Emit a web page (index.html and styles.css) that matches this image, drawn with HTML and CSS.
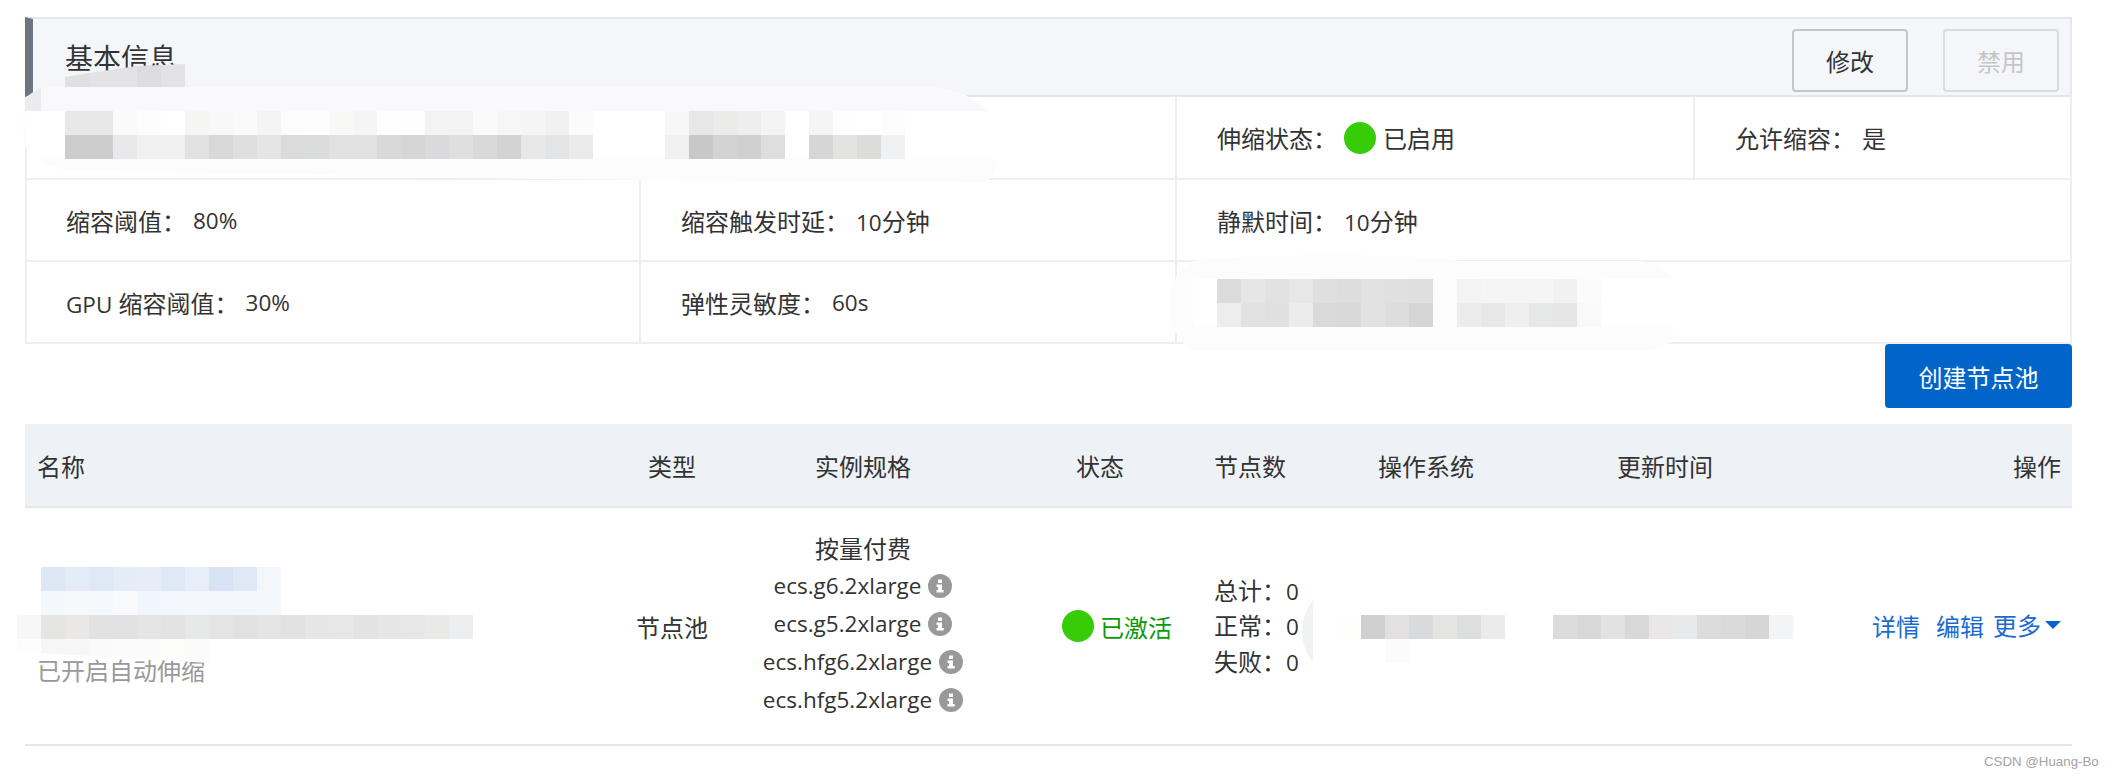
FILE: index.html
```html
<!DOCTYPE html>
<html lang="zh-CN">
<head>
<meta charset="utf-8">
<title>节点池</title>
<link rel="stylesheet" href="styles.css">
</head>
<body>
<main class="page">
  <section class="panel">
    <header class="panel-head">
      <h2 class="panel-title">基本信息</h2>
      <div class="panel-actions">
        <button class="btn">修改</button>
        <button class="btn btn-disabled" disabled>禁用</button>
      </div>
    </header>
    <div class="info-grid">
      <div class="cell cell-wide-2"></div>
      <div class="cell"><span class="label">伸缩状态：</span><span class="dot"></span><span>已启用</span></div>
      <div class="cell cell-last"><span class="label">允许缩容：</span><span>是</span></div>
      <div class="cell cell-first"><span class="label">缩容阈值：</span><span class="latin">80%</span></div>
      <div class="cell"><span class="label">缩容触发时延：</span><span><span class="latin">10</span>分钟</span></div>
      <div class="cell cell-wide-end"><span class="label">静默时间：</span><span><span class="latin">10</span>分钟</span></div>
      <div class="cell cell-first"><span class="label"><span class="latin">GPU</span> 缩容阈值：</span><span class="latin">30%</span></div>
      <div class="cell"><span class="label">弹性灵敏度：</span><span class="latin">60s</span></div>
      <div class="cell cell-wide-end"></div>
    </div>
  </section>
  <div class="toolbar"><button class="btn-primary">创建节点池</button></div>
  <table class="pool-table">
    <colgroup>
      <col class="c-name"><col class="c-type"><col class="c-spec"><col class="c-status"><col class="c-nodes"><col class="c-os"><col class="c-time"><col class="c-act">
    </colgroup>
    <thead>
      <tr>
        <th class="left">名称</th>
        <th>类型</th>
        <th>实例规格</th>
        <th class="left th-status">状态</th>
        <th class="left">节点数</th>
        <th class="left">操作系统</th>
        <th class="left">更新时间</th>
        <th class="right">操作</th>
      </tr>
    </thead>
    <tbody>
      <tr>
        <td class="td-name"><div class="muted">已开启自动伸缩</div></td>
        <td class="center">节点池</td>
        <td class="td-spec">
          <div class="spec spec-title">按量付费</div>
          <div class="spec"><span class="latin">ecs.g6.2xlarge</span><svg class="info" viewBox="0 0 24 24"><circle cx="12" cy="12" r="12" fill="#999"/><path fill="#fff" d="M10 5.500h4v3.400h-4zM8.500 10.500H14V16h1.700v2.500H8.500V16H10v-3H8.500z"/></svg></div>
          <div class="spec"><span class="latin">ecs.g5.2xlarge</span><svg class="info" viewBox="0 0 24 24"><circle cx="12" cy="12" r="12" fill="#999"/><path fill="#fff" d="M10 5.500h4v3.400h-4zM8.500 10.500H14V16h1.700v2.500H8.500V16H10v-3H8.500z"/></svg></div>
          <div class="spec"><span class="latin">ecs.hfg6.2xlarge</span><svg class="info" viewBox="0 0 24 24"><circle cx="12" cy="12" r="12" fill="#999"/><path fill="#fff" d="M10 5.500h4v3.400h-4zM8.500 10.500H14V16h1.700v2.500H8.500V16H10v-3H8.500z"/></svg></div>
          <div class="spec"><span class="latin">ecs.hfg5.2xlarge</span><svg class="info" viewBox="0 0 24 24"><circle cx="12" cy="12" r="12" fill="#999"/><path fill="#fff" d="M10 5.500h4v3.400h-4zM8.500 10.500H14V16h1.700v2.500H8.500V16H10v-3H8.500z"/></svg></div>
        </td>
        <td class="td-status"><div class="status"><span class="dot"></span><span class="ok">已激活</span></div></td>
        <td class="td-nodes">
          <div class="count">总计：<span class="latin">0</span></div>
          <div class="count">正常：<span class="latin">0</span></div>
          <div class="count">失败：<span class="latin">0</span></div>
        </td>
        <td></td>
        <td></td>
        <td class="td-act">
          <div class="links"><a class="link link-a">详情</a><a class="link link-b">编辑</a><a class="link link-c">更多</a><span class="caret"></span></div>
        </td>
      </tr>
    </tbody>
  </table>
</main>

<svg class="mosaic" viewBox="0 0 2110 779" aria-hidden="true">
  <defs>
    <clipPath id="topclip"><polygon points="65,77 89,73 137,66 185,64 185,87 65,87"/></clipPath>
    <clipPath id="lowclip"><polygon points="17,639 209,639 209,663 41,653 17,650"/></clipPath>
  </defs>
  <g clip-path="url(#topclip)">
    <rect x="65" y="63" fill="#e0e0e3"/><rect x="89" y="63" fill="#e3e3e6"/><rect x="113" y="63" fill="#e3e3e6"/><rect x="137" y="63" fill="#dddde1"/><rect x="161" y="63" fill="#e3e3e6"/>
  </g>
  <path fill="#fcfcfc" d="M41 87H933Q970 92 990 111L997 165Q995 178 983 183L540 179L163 172L63 170Q30 160 25 147Q20 125 25 98Z"/>
  <path fill="#f9f9fb" d="M41 87H933Q965 92 988 111H25V98Z"/>
  <path fill="#ebeced" d="M41 87L25 98V111H41Z"/>
  <path fill="#fff" d="M41 111H990L996 159H32Q24 135 25 111Z"/>
  <g>
    <rect x="65" y="111" fill="#e8e8e8"/><rect x="89" y="111" fill="#e8e8e8"/><rect x="113" y="111" fill="#fafafa"/><rect x="137" y="111" fill="#fcfcfc"/><rect x="185" y="111" fill="#f5f5f3"/><rect x="209" y="111" fill="#f8f8f8"/><rect x="233" y="111" fill="#fafafa"/><rect x="257" y="111" fill="#f4f4f4"/><rect x="281" y="111" fill="#fcfcfc"/><rect x="305" y="111" fill="#fdfdfd"/><rect x="329" y="111" fill="#f8f8f6"/><rect x="353" y="111" fill="#f5f5f5"/><rect x="377" y="111" fill="#fefefe"/><rect x="401" y="111" fill="#fefefe"/><rect x="425" y="111" fill="#f3f3f3"/><rect x="449" y="111" fill="#f4f4f4"/><rect x="473" y="111" fill="#fafafa"/><rect x="497" y="111" fill="#f6f6f6"/><rect x="521" y="111" fill="#f5f5f5"/><rect x="545" y="111" fill="#f1f1f1"/><rect x="569" y="111" fill="#fbfbfb"/><rect x="665" y="111" fill="#f7f7f7"/><rect x="689" y="111" fill="#e7e7e7"/><rect x="713" y="111" fill="#ebebe9"/><rect x="737" y="111" fill="#eeeeee"/><rect x="761" y="111" fill="#f4f4f4"/><rect x="809" y="111" fill="#f5f5f5"/><rect x="833" y="111" fill="#fefefe"/><rect x="881" y="111" fill="#fcfcfc"/>
    <rect x="65" y="135" fill="#cdcdcd"/><rect x="89" y="135" fill="#cdcdcd"/><rect x="113" y="135" fill="#e9e9eb"/><rect x="137" y="135" fill="#f0f0f0"/><rect x="161" y="135" fill="#f1f1f1"/><rect x="185" y="135" fill="#e2e2e2"/><rect x="209" y="135" fill="#d8d8d8"/><rect x="233" y="135" fill="#dfdfdf"/><rect x="257" y="135" fill="#e5e5e5"/><rect x="281" y="135" fill="#dbdbdb"/><rect x="305" y="135" fill="#dbdcdc"/><rect x="329" y="135" fill="#e1e1e1"/><rect x="353" y="135" fill="#e2e2e2"/><rect x="377" y="135" fill="#d9d9d9"/><rect x="401" y="135" fill="#d6d6d6"/><rect x="425" y="135" fill="#dadadd"/><rect x="449" y="135" fill="#dfdfdf"/><rect x="473" y="135" fill="#d9d9d9"/><rect x="497" y="135" fill="#d3d3d3"/><rect x="521" y="135" fill="#e8e8e8"/><rect x="545" y="135" fill="#e3e4e6"/><rect x="569" y="135" fill="#ebebeb"/><rect x="665" y="135" fill="#f0f0f0"/><rect x="689" y="135" fill="#c8c8c8"/><rect x="713" y="135" fill="#d3d3d3"/><rect x="737" y="135" fill="#d0d0d0"/><rect x="761" y="135" fill="#dedede"/><rect x="809" y="135" fill="#d6d6d6"/><rect x="833" y="135" fill="#e3e3e1"/><rect x="857" y="135" fill="#dcdcda"/><rect x="881" y="135" fill="#f0f1f3"/>
  </g>

  <path fill="#fcfcfc" d="M1193 261Q1250 254 1350 255Q1420 255 1460 261H1640Q1665 265 1673 279V338Q1665 351 1640 351H1193Q1169 335 1169 305Q1169 275 1193 261Z"/>
  <path fill="#fff" d="M1193 279H1673V327H1193Z"/>
  <g>
    <rect x="1217" y="279" fill="#dcdcdc"/><rect x="1241" y="279" fill="#e6e6e6"/><rect x="1265" y="279" fill="#e2e2e2"/><rect x="1289" y="279" fill="#e7e7e7"/><rect x="1313" y="279" fill="#dfdfdf"/><rect x="1337" y="279" fill="#dddddd"/><rect x="1361" y="279" fill="#e1e1e1"/><rect x="1385" y="279" fill="#e0e0e0"/><rect x="1409" y="279" fill="#dfdfdf"/><rect x="1433" y="279" fill="#fcfcfc"/><rect x="1457" y="279" fill="#f3f3f3"/><rect x="1481" y="279" fill="#f5f5f5"/><rect x="1505" y="279" fill="#f5f5f5"/><rect x="1529" y="279" fill="#f5f5f5"/><rect x="1553" y="279" fill="#f1f1f1"/><rect x="1577" y="279" fill="#fbfbfb"/>
    <rect x="1217" y="303" fill="#ededed"/><rect x="1241" y="303" fill="#e2e2e2"/><rect x="1265" y="303" fill="#e0e0e0"/><rect x="1289" y="303" fill="#ececec"/><rect x="1313" y="303" fill="#dadada"/><rect x="1337" y="303" fill="#d9d9d9"/><rect x="1361" y="303" fill="#e2e2e2"/><rect x="1385" y="303" fill="#dddddd"/><rect x="1409" y="303" fill="#d5d5d5"/><rect x="1433" y="303" fill="#fcfcfc"/><rect x="1457" y="303" fill="#ececec"/><rect x="1481" y="303" fill="#e6e7e6"/><rect x="1505" y="303" fill="#efefef"/><rect x="1529" y="303" fill="#e6e8e7"/><rect x="1553" y="303" fill="#e6e6e6"/><rect x="1577" y="303" fill="#f8f9f8"/>
  </g>

  <g>
    <rect x="41" y="567" fill="#dde7f5"/><rect x="65" y="567" fill="#e3ebf7"/><rect x="89" y="567" fill="#dfe8f5"/><rect x="113" y="567" fill="#e4ecf7"/><rect x="137" y="567" fill="#e6edf8"/><rect x="161" y="567" fill="#dfe8f5"/><rect x="185" y="567" fill="#e6eef9"/><rect x="209" y="567" fill="#d7e3f4"/><rect x="233" y="567" fill="#dfe8f7"/><rect x="257" y="567" fill="#f3f7fc"/>
    <rect x="41" y="591" fill="#f4f7fc"/><rect x="65" y="591" fill="#f6f8fc"/><rect x="89" y="591" fill="#f5f8fc"/><rect x="113" y="591" fill="#f8fafd"/><rect x="137" y="591" fill="#f1f5fc"/><rect x="161" y="591" fill="#f3f6fc"/><rect x="185" y="591" fill="#f4f7fc"/><rect x="209" y="591" fill="#f3f6fc"/><rect x="233" y="591" fill="#f4f7fc"/><rect x="257" y="591" fill="#f4f7fc"/>
    <rect x="17" y="615" fill="#f7f7f7"/><rect x="41" y="615" fill="#e5e5e4"/><rect x="65" y="615" fill="#e9e8e6"/><rect x="89" y="615" fill="#e1e2e1"/><rect x="113" y="615" fill="#e1e2e1"/><rect x="137" y="615" fill="#e5e5e5"/><rect x="161" y="615" fill="#e3e3e3"/><rect x="185" y="615" fill="#e6e7e7"/><rect x="209" y="615" fill="#e4e4e4"/><rect x="233" y="615" fill="#e1e1e1"/><rect x="257" y="615" fill="#e4e4e4"/><rect x="281" y="615" fill="#e2e2e2"/><rect x="305" y="615" fill="#e6e6e6"/><rect x="329" y="615" fill="#e7e7e7"/><rect x="353" y="615" fill="#e3e3e3"/><rect x="377" y="615" fill="#e6e6e6"/><rect x="401" y="615" fill="#e7e7e7"/><rect x="425" y="615" fill="#e9e9e7"/><rect x="449" y="615" fill="#ecedef"/>
  </g>
  <g clip-path="url(#lowclip)">
    <rect x="17" y="639" fill="#fdfdfd"/><rect x="41" y="639" fill="#f6f6f6"/><rect x="65" y="639" fill="#f7f7f7"/><rect x="89" y="639" fill="#fafafa"/><rect x="113" y="639" fill="#fbfbfb"/><rect x="137" y="639" fill="#fbfbfb"/><rect x="161" y="639" fill="#fcfcfa"/><rect x="185" y="639" fill="#fbfbfb"/>
  </g>

  <path fill="#f1f2f2" d="M1313 600Q1302 615 1302 631Q1302 648 1313 663Z"/>
  <g>
    <rect x="1337" y="615" fill="#fefefc"/><rect x="1361" y="615" fill="#d0d0d0"/><rect x="1385" y="615" fill="#e2e0e0"/><rect x="1409" y="615" fill="#d9dadc"/><rect x="1433" y="615" fill="#e4e4e2"/><rect x="1457" y="615" fill="#dddfdf"/><rect x="1481" y="615" fill="#ebebeb"/>
    <rect x="1385" y="639" fill="#fbfbfb"/>
    <rect x="1553" y="615" fill="#dcdcdc"/><rect x="1577" y="615" fill="#d8d8d8"/><rect x="1601" y="615" fill="#e2e2e2"/><rect x="1625" y="615" fill="#d8d8d8"/><rect x="1649" y="615" fill="#e9e7e8"/><rect x="1673" y="615" fill="#e8e9eb"/><rect x="1697" y="615" fill="#dcdcdc"/><rect x="1721" y="615" fill="#dadada"/><rect x="1745" y="615" fill="#d6d6d6"/><rect x="1769" y="615" fill="#f3f4f6"/>
  </g>
</svg>

<div class="watermark">CSDN @Huang-Bo</div>
</body>
</html>
```

FILE: styles.css
```css
* { box-sizing: border-box; }

html, body {
  margin: 0;
  background: #fff;
}

body {
  position: relative;
  height: 779px;
  overflow: hidden;
  color: #333;
  font-family: "Open Sans", "Noto Sans CJK SC", sans-serif;
  font-size: 24px;
}

.page {
  padding: 17px 38px 0 25px;
}

.latin { font-size: 22.5px; }

/* Panel */
.panel-head {
  display: flex;
  align-items: center;
  justify-content: space-between;
  height: 80px;
  background: #f4f6fa;
  border-top: 2px solid #e3e6eb;
  border-bottom: 2px solid #e3e6eb;
  border-right: 2px solid #e6e8ed;
  border-left: 8px solid #6d7580;
  padding: 0 11px 0 32px;
}

.panel-title {
  margin: 2px 0 0;
  font-size: 28px;
  font-weight: 400;
  line-height: 40px;
}

.panel-actions {
  display: flex;
  gap: 35px;
  padding-top: 7px;
}

.btn {
  width: 116px;
  height: 63px;
  padding: 0;
  font: inherit;
  color: #333;
  background: #f4f6fa;
  border: 2px solid #c2c6cc;
  border-radius: 4px;
}

.btn-disabled {
  color: #c6c6c6;
  border-color: #d8dbdf;
}

.info-grid {
  display: grid;
  grid-template-columns: 614px 536px 518px 377px;
  grid-template-rows: 83px 82px 82px;
  border-left: 2px solid #eeeeef;
  border-right: 2px solid #eeeeef;
}

.cell {
  display: flex;
  align-items: center;
  padding-left: 40px;
  border-right: 2px solid #eeeeef;
  border-bottom: 2px solid #eeeeef;
}

.cell-first { padding-left: 39px; }
.cell-wide-2 { grid-column: span 2; }
.cell-last { border-right: 0; }
.cell-wide-end { grid-column: span 2; border-right: 0; }

.label { margin-right: 7px; }

.dot {
  flex: none;
  width: 32px;
  height: 32px;
  margin-right: 7px;
  background: #36cd06;
  border-radius: 50%;
}

/* Toolbar */
.toolbar {
  display: flex;
  justify-content: flex-end;
  margin-bottom: 16px;
}

.btn-primary {
  width: 187px;
  height: 64px;
  padding: 0;
  font: inherit;
  color: #fff;
  background: #0064c8;
  border: 0;
  border-radius: 4px;
}

/* Table */
.pool-table {
  width: 2047px;
  table-layout: fixed;
  border-collapse: collapse;
}

.c-name { width: 607px; }
.c-type { width: 80px; }
.c-spec { width: 302px; }
.c-status { width: 188px; }
.c-nodes { width: 164px; }
.c-os { width: 239px; }
.c-time { width: 255px; }
.c-act { width: 212px; }

.pool-table th {
  height: 83px;
  padding: 1px 0 1px;
  font-weight: 400;
  text-align: center;
  background: #eef1f6;
  border-bottom: 2px solid #e3e6eb;
}

.pool-table th.left { text-align: left; padding-left: 12px; }
.pool-table th.right { text-align: right; padding-right: 11px; }
.pool-table th.th-status { padding-left: 62px; }

.pool-table td {
  height: 238px;
  padding: 0;
  border-bottom: 2px solid #e3e6eb;
}

.center { text-align: center; }

.td-name { vertical-align: top; }
.pool-table td.td-name { padding: 146px 0 0 12px; }
.muted { color: #999; line-height: 34px; }

.pool-table td.td-spec { padding-bottom: 2px; }
.spec { line-height: 38px; display: flex; justify-content: center; align-items: center; }
.spec-title { line-height: 36px; }
.info { flex: none; width: 24px; height: 24px; margin-left: 7px; }

.pool-table td.td-status { padding-left: 48px; }
.status { display: flex; align-items: center; }
.status .dot { margin-right: 6px; }
.ok { color: #0a9a0a; }

.pool-table td.td-nodes { padding: 2px 0 0 12px; }
.count { line-height: 34.5px; }

.links {
  display: flex;
  align-items: center;
  justify-content: flex-end;
  padding-right: 11px;
  margin-bottom: 2px;
}

.link { color: #1b6ad0; }
.link-a { margin-right: 16px; }
.link-b { margin-right: 9px; }
.link-c { margin-right: 4px; margin-bottom: 2px; }

.caret {
  width: 0;
  height: 0;
  border-left: 8px solid transparent;
  border-right: 8px solid transparent;
  border-top: 8px solid #0064c8;
}

/* Overlays */
.mosaic {
  position: absolute;
  top: 0;
  left: 0;
  width: 2110px;
  height: 779px;
}

.mosaic g rect { width: 24px; height: 24px; }

.watermark {
  position: absolute;
  top: 753px;
  left: 1984px;
  font-family: "Liberation Sans", sans-serif;
  font-size: 13.3px;
  line-height: 18px;
  color: #a3a3a3;
  white-space: nowrap;
}
```
